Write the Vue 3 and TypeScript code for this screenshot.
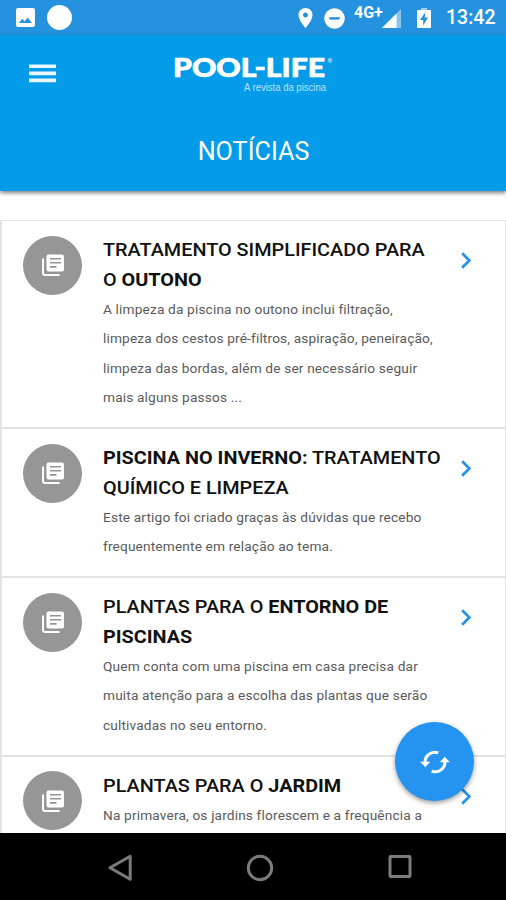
<script setup lang="ts">
interface TitlePart {
  text: string
  strong: boolean
}

interface NewsItem {
  id: number
  title: TitlePart[][]
  summary: string[]
}

const news: NewsItem[] = [
  {
    id: 1,
    title: [
      [{ text: 'TRATAMENTO SIMPLIFICADO PARA', strong: false }],
      [{ text: 'O ', strong: false }, { text: 'OUTONO', strong: true }],
    ],
    summary: [
      'A limpeza da piscina no outono inclui filtração,',
      'limpeza dos cestos pré-filtros, aspiração, peneiração,',
      'limpeza das bordas, além de ser necessário seguir',
      'mais alguns passos ...',
    ],
  },
  {
    id: 2,
    title: [
      [{ text: 'PISCINA NO INVERNO:', strong: true }, { text: ' TRATAMENTO', strong: false }],
      [{ text: 'QUÍMICO E LIMPEZA', strong: false }],
    ],
    summary: ['Este artigo foi criado graças às dúvidas que recebo', 'frequentemente em relação ao tema.'],
  },
  {
    id: 3,
    title: [
      [{ text: 'PLANTAS PARA O ', strong: false }, { text: 'ENTORNO DE', strong: true }],
      [{ text: 'PISCINAS', strong: true }],
    ],
    summary: [
      'Quem conta com uma piscina em casa precisa dar',
      'muita atenção para a escolha das plantas que serão',
      'cultivadas no seu entorno.',
    ],
  },
  {
    id: 4,
    title: [[{ text: 'PLANTAS PARA O ', strong: false }, { text: 'JARDIM', strong: true }]],
    summary: ['Na primavera, os jardins florescem e a frequência a'],
  },
]
</script>

<template>
  <div class="screen">
    <div class="status">
      <svg class="picture" width="19" height="19" viewBox="0 0 19 19">
        <rect width="19" height="19" rx="2" fill="#fff" />
        <path d="M3 15l3.2-4.2 2.4 2.6 3-3.8L16 15z" fill="#2492df" />
      </svg>
      <span class="dot"></span>
      <span class="spacer"></span>
      <svg class="place" width="15" height="20" viewBox="5 2 14 20">
        <path fill="#fff" d="M12 2C8.13 2 5 5.13 5 9c0 5.25 7 13 7 13s7-7.75 7-13c0-3.87-3.13-7-7-7zm0 9.500a2.500 2.500 0 0 1 0-5 2.500 2.500 0 0 1 0 5z" />
      </svg>
      <svg class="dnd" width="21" height="21" viewBox="0 0 21 21">
        <circle cx="10.500" cy="10.500" r="10.300" fill="#fff" />
        <rect x="5.300" y="9.200" width="10.400" height="2.400" fill="#2492df" />
      </svg>
      <span class="network">4G+</span>
      <svg class="signal" width="19" height="19" viewBox="0 0 19 19">
        <path d="M0 19L19 0v19z" fill="#8bc4ed" />
        <path d="M0 19L14.500 4.500V19z" fill="#fff" />
      </svg>
      <svg class="battery" width="14" height="20" viewBox="0 0 14 20">
        <path d="M4 0h6v2H4z" fill="#a5d1f1" />
        <path d="M1 2h12q1 0 1 1v16q0 1-1 1H1q-1 0-1-1V3q0-1 1-1z" fill="#fff" />
        <path d="M8.500 4L3 12h3.200v5.500L11 9.500H7.700z" fill="#2492df" />
      </svg>
      <span class="clock">13:42</span>
    </div>

    <header class="header">
      <div class="toolbar">
        <svg class="menu" width="27" height="19" viewBox="0 0 27 19">
          <path d="M0 2.250h27M0 9.350h27M0 16.450h27" stroke="#e9f6fe" stroke-width="3.700" />
        </svg>
        <svg class="logo" width="170" height="48" viewBox="0 0 170 48">
          <text class="brand" x="0" y="22.800" textLength="152" lengthAdjust="spacingAndGlyphs">POOL-LIFE</text>
          <text class="reg" x="154.500" y="9">®</text>
          <text class="tagline" x="71" y="37" textLength="82" lengthAdjust="spacingAndGlyphs">A revista da piscina</text>
        </svg>
      </div>
      <h1 class="heading">NOTÍCIAS</h1>
    </header>

    <main class="list">
      <article v-for="item in news" :key="item.id" class="item">
        <div class="avatar">
          <svg width="24" height="24" viewBox="0 0 24 24">
            <path d="M2 5.500v14.700A1.800 1.800 0 0 0 3.800 22H18.500" fill="none" stroke="#fff" stroke-width="2" />
            <rect x="5.500" y="1.500" width="17.500" height="17" rx="2" fill="#fff" />
            <path d="M9 5.700h11M9 9.800h11M9 13.900h6.500" stroke="#969696" stroke-width="1.600" />
          </svg>
        </div>
        <div class="content">
          <h2 class="title">
            <span v-for="(line, l) in item.title" :key="l" class="line">
              <span v-for="(part, p) in line" :key="p" :class="{ strong: part.strong }">{{ part.text }}</span>
            </span>
          </h2>
          <p class="summary">
            <span v-for="line in item.summary" :key="line" class="line">{{ line }}</span>
          </p>
        </div>
        <svg class="chevron" width="10" height="17" viewBox="0 0 10 17">
          <path d="M1.200 1.200L8.300 8.500 1.200 15.800" fill="none" stroke="#2792e2" stroke-width="2.700" />
        </svg>
      </article>
    </main>

    <button class="fab" aria-label="Atualizar">
      <svg width="30" height="24" viewBox="0 0 30 24">
        <path d="M5.200 13.500A9.700 9.700 0 0 1 18.300 2.900M24.800 10.500A9.700 9.700 0 0 1 11.700 21.100" fill="none" stroke="#fff" stroke-width="3" />
        <path d="M0 11.700h10.200L5.400 17.300zM19.800 12.300H30L24.600 6.700z" fill="#fff" />
      </svg>
    </button>

    <nav class="nav">
      <svg width="24" height="28" viewBox="0 0 24 28">
        <path d="M2 13.700L22.200 2.200v23z" fill="none" stroke="#7b7b7b" stroke-width="3" stroke-linejoin="round" />
      </svg>
      <svg width="28" height="28" viewBox="0 0 28 28">
        <circle cx="14" cy="14" r="11.700" fill="none" stroke="#7b7b7b" stroke-width="3" />
      </svg>
      <svg width="24" height="28" viewBox="0 0 24 28">
        <rect x="2" y="2.500" width="20" height="20" rx=".5" fill="none" stroke="#7b7b7b" stroke-width="3" />
      </svg>
    </nav>
  </div>
</template>

<style>
body {
  margin: 0;
  overflow: hidden;
}
</style>

<style scoped>
.screen {
  position: relative;
  display: flex;
  flex-direction: column;
  box-sizing: border-box;
  width: 506px;
  height: 900px;
  overflow: hidden;
  background: #fff;
  font-family: Roboto, 'Liberation Sans', sans-serif;
}
.status {
  display: flex;
  flex: none;
  align-items: flex-start;
  box-sizing: border-box;
  height: 35px;
  padding: 8px 10px 0 16px;
  background: #2492df;
  color: #fff;
}
.dot {
  width: 25px;
  height: 25px;
  margin: -3px 0 0 12px;
  border-radius: 50%;
  background: #fff;
}
.spacer {
  flex: 1;
}
.place {
  margin-right: 11px;
}
.dnd {
  margin-right: 9px;
}
.network {
  width: 28px;
  margin: -4px 0 0;
  font-size: 16px;
  font-weight: 700;
  line-height: 18px;
}
.signal {
  margin: 1px 16px 0 0;
}
.battery {
  margin-right: 15px;
}
.clock {
  width: 50px;
  margin-top: -2px;
  font-size: 19.500px;
  font-weight: 500;
  line-height: 24px;
  white-space: nowrap;
}
.header {
  z-index: 1;
  flex: none;
  height: 156px;
  background: #049ce8;
  box-shadow: 0 2px 4px rgba(0, 0, 0, 0.5);
  color: #fff;
}
.toolbar {
  display: flex;
  align-items: flex-start;
  height: 80px;
  padding-left: 29px;
}
.menu {
  margin-top: 29px;
}
.logo {
  margin: 19px 0 0 117px;
  overflow: visible;
  fill: #fff;
}
.brand {
  font-family: Lato, sans-serif;
  font-size: 27px;
  font-weight: 900;
  stroke: #fff;
  stroke-width: 0.7px;
  stroke-linejoin: round;
}
.reg {
  font-size: 6px;
}
.tagline {
  font-family: 'Liberation Sans', sans-serif;
  font-size: 10.500px;
  fill: #b9e3fa;
}
.heading {
  margin: 20px 0 0 1px;
  font-size: 25.200px;
  font-weight: 400;
  line-height: 34px;
  text-align: center;
}
.list {
  flex: 1;
  min-height: 0;
  padding-top: 29px;
  overflow: hidden;
}
.item {
  display: flex;
  align-items: flex-start;
  box-sizing: border-box;
  padding: 14.500px 34px 14.500px 21px;
  border: solid #e3e3e3;
  border-width: 1px 1px 1px 2px;
}
.avatar {
  display: flex;
  flex: none;
  align-items: center;
  justify-content: center;
  width: 59px;
  height: 59px;
  margin-right: 21px;
  border-radius: 50%;
  background: #969696;
}
.content {
  flex: 1;
  min-width: 0;
}
.title,
.summary {
  margin: 0;
  line-height: 29.500px;
  white-space: pre;
}
.title {
  margin: -0.500px 0 0.500px;
  color: #111;
  font-size: 19px;
  font-weight: 500;
  transform: scaleX(1.044);
  transform-origin: left center;
}
.strong {
  font-weight: 700;
}
.summary {
  color: #5a5a5a;
  font-size: 13.700px;
  letter-spacing: 0.150px;
}
.line {
  display: block;
}
.chevron {
  flex: none;
  margin-top: 16.500px;
}
.fab {
  position: absolute;
  z-index: 2;
  top: 722px;
  left: 395px;
  display: flex;
  align-items: center;
  justify-content: center;
  width: 79px;
  height: 79px;
  padding: 0;
  border: 0;
  border-radius: 50%;
  background: #2494f0;
  box-shadow: 0 2px 5px rgba(0, 0, 0, 0.4);
}
.nav {
  z-index: 1;
  display: flex;
  flex: none;
  align-items: flex-start;
  justify-content: space-between;
  box-sizing: border-box;
  height: 67px;
  padding: 21px 94px 0 108px;
  background: #000;
}
</style>
